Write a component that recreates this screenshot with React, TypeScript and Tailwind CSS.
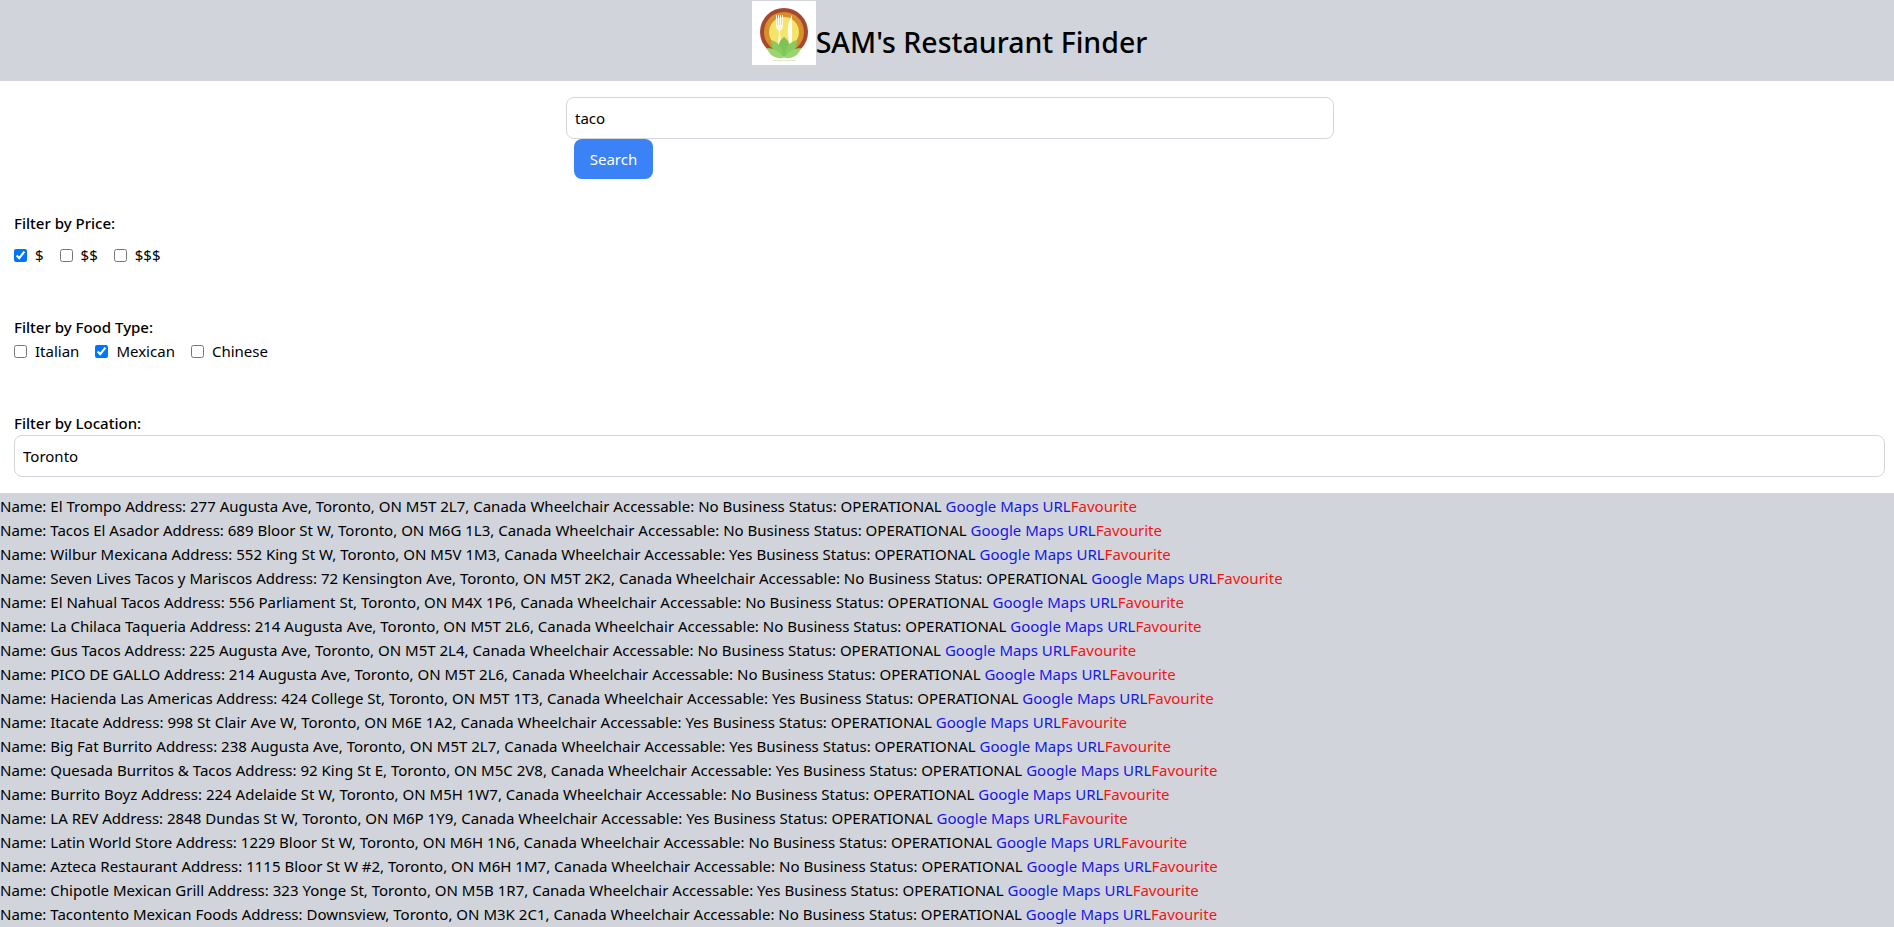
const results = [
  ["El Trompo", "277 Augusta Ave, Toronto, ON M5T 2L7, Canada", "No"],
  ["Tacos El Asador", "689 Bloor St W, Toronto, ON M6G 1L3, Canada", "No"],
  ["Wilbur Mexicana", "552 King St W, Toronto, ON M5V 1M3, Canada", "Yes"],
  ["Seven Lives Tacos y Mariscos", "72 Kensington Ave, Toronto, ON M5T 2K2, Canada", "No"],
  ["El Nahual Tacos", "556 Parliament St, Toronto, ON M4X 1P6, Canada", "No"],
  ["La Chilaca Taqueria", "214 Augusta Ave, Toronto, ON M5T 2L6, Canada", "No"],
  ["Gus Tacos", "225 Augusta Ave, Toronto, ON M5T 2L4, Canada", "No"],
  ["PICO DE GALLO", "214 Augusta Ave, Toronto, ON M5T 2L6, Canada", "No"],
  ["Hacienda Las Americas", "424 College St, Toronto, ON M5T 1T3, Canada", "Yes"],
  ["Itacate", "998 St Clair Ave W, Toronto, ON M6E 1A2, Canada", "Yes"],
  ["Big Fat Burrito", "238 Augusta Ave, Toronto, ON M5T 2L7, Canada", "Yes"],
  ["Quesada Burritos & Tacos", "92 King St E, Toronto, ON M5C 2V8, Canada", "Yes"],
  ["Burrito Boyz", "224 Adelaide St W, Toronto, ON M5H 1W7, Canada", "No"],
  ["LA REV", "2848 Dundas St W, Toronto, ON M6P 1Y9, Canada", "Yes"],
  ["Latin World Store", "1229 Bloor St W, Toronto, ON M6H 1N6, Canada", "No"],
  ["Azteca Restaurant", "1115 Bloor St W #2, Toronto, ON M6H 1M7, Canada", "No"],
  ["Chipotle Mexican Grill", "323 Yonge St, Toronto, ON M5B 1R7, Canada", "Yes"],
  ["Tacontento Mexican Foods", "Downsview, Toronto, ON M3K 2C1, Canada", "No"],
];

function Logo() {
  return (
    <svg width="64" height="64" viewBox="0 0 64 64" className="block bg-white">
      <circle cx="32" cy="31" r="24" fill="#a5482f" />
      <circle cx="32" cy="31" r="20" fill="#d98f2b" />
      <circle cx="32" cy="31" r="15" fill="#f4e46a" />
      <path d="M24 14v11c0 3 2 4 3 5l-1 14h3l-1-14c1-1 3-2 3-5V14h-1v10h-1V14h-1v10h-1V14h-1v10h-1V14z" fill="#fdf8e0" />
      <path d="M40 14c-3 5-5 13-4 20l1 8h3V14z" fill="#ffffff" />
      <path d="M32 36c-7 5-7 12 0 20 7-8 7-15 0-20z" fill="#7cc455" />
      <path d="M19 39c0 9 4 15 13 17-1-9-5-15-13-17z" fill="#86cc5e" />
      <path d="M45 39c0 9-4 15-13 17 1-9 5-15 13-17z" fill="#86cc5e" />
      <path d="M15 47c2 7 8 11 17 10-4-6-10-10-17-10z" fill="#9ad670" />
      <path d="M49 47c-2 7-8 11-17 10 4-6 10-10 17-10z" fill="#9ad670" />
      <path d="M20 59h24v1H20z" fill="#dcebd0" />
    </svg>
  );
}

function Check({ label, checked }: { label: string; checked?: boolean }) {
  return (
    <label className="flex items-center mr-4">
      <input type="checkbox" defaultChecked={checked} className="mr-2" />
      {label}
    </label>
  );
}

export default function App() {
  return (
    <div className="h-screen overflow-hidden bg-white text-black text-[15.03px] leading-6 font-['Noto_Sans',sans-serif]">
      <header className="h-[81px] bg-[#d1d5db] pt-px pl-[5px] flex justify-center">
        <Logo />
        <h1 className="mt-[23px] text-[28.5px] font-medium leading-9">SAM's Restaurant Finder</h1>
      </header>

      <div className="flex flex-col items-center pt-4 pl-[6px]">
        <div className="w-3xl">
          <input
            defaultValue="taco"
            className="block w-full h-[42px] border border-gray-300 rounded-lg px-2 outline-none"
          />
          <button className="ml-2 block h-[40px] w-[79px] rounded-lg bg-[#3b82f6] text-white">Search</button>
        </div>
      </div>

      <div className="pl-[14px] pr-[9px]">
        <p className="mt-[32px] font-medium">Filter by Price:</p>
        <div className="flex mt-2"><Check label="$" checked /><Check label="$$" /><Check label="$$$" /></div>
        <p className="mt-[48px] font-medium">Filter by Food Type:</p>
        <div className="flex"><Check label="Italian" /><Check label="Mexican" checked /><Check label="Chinese" /></div>
        <p className="mt-[48px] font-medium">Filter by Location:</p>
        <input
          defaultValue="Toronto"
          className="block w-full h-[42px] border border-gray-300 rounded-lg px-2 outline-none"
        />
      </div>

      <div className="mt-4 pt-px bg-[#d1d5db] h-[500px]">
        {results.map((r) => (
          <div key={r[0]} className="whitespace-nowrap">
            Name: {r[0]} Address: {r[1]} Wheelchair Accessable: {r[2]} Business Status: OPERATIONAL{" "}
            <a className="text-[#1515e6]">Google Maps URL</a>
            <span className="text-[#f01515]">Favourite</span>
          </div>
        ))}
      </div>
    </div>
  );
}
